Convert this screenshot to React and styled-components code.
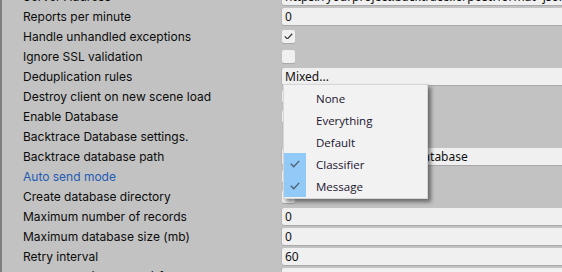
import React from 'react'
import styled, { createGlobalStyle } from 'styled-components'

const GlobalStyle = createGlobalStyle`
  html, body {
    margin: 0;
    padding: 0;
    background: #c2c2c2;
    overflow: hidden;
  }
`

const Inspector = styled.div`
  position: relative;
  width: 562px;
  height: 272px;
  overflow: hidden;
  border-left: 2px solid #7f7f7f;
  box-sizing: border-box;
  font-family: Inter, 'Noto Sans', sans-serif;
  font-size: 12px;
  color: #0b0b0b;
`

const List = styled.div`
  display: flex;
  flex-direction: column;
  margin-top: -14px;
`

const Row = styled.div`
  display: grid;
  grid-template-columns: 280px 1fr;
  align-items: center;
  height: 20px;
`

const Label = styled.div`
  padding-left: 21px;
  white-space: nowrap;
  color: ${(p) => (p.$link ? '#1f5bb4' : '#0b0b0b')};
`

const Field = styled.div`
  height: 17px;
  line-height: 17px;
  background: #f0f0f0;
  border-radius: 2px 0 0 2px;
  box-shadow: 0 1px 0 #a9a9a9, -1px 0 0 #b6b6b6;
  padding-left: 3px;
  white-space: nowrap;
  overflow: hidden;
  font-family: 'Noto Sans', sans-serif;
  font-size: 12px;
  color: #101010;
`

const Box = styled.div`
  width: 13px;
  height: 13px;
  border-radius: 2px;
  background: #f0f0f0;
  box-shadow: 0 1px 0 #a9a9a9;
  display: flex;
  align-items: center;
  justify-content: center;
`

const Menu = styled.div`
  position: absolute;
  left: 281px;
  top: 84px;
  width: 143px;
  padding: 2px 0 1px;
  background: #f2f2f2;
  border: 1px solid #d6d6d6;
  box-shadow: 3px 3px 4px rgba(0, 0, 0, 0.45);
  font-family: 'Open Sans', 'Noto Sans', sans-serif;
  font-size: 11.5px;
  color: #1b1530;
`

const Item = styled.div`
  display: flex;
  align-items: center;
  height: 22px;
`

const Check = styled.div`
  width: 22px;
  height: 22px;
  display: flex;
  align-items: center;
  justify-content: center;
  background: ${(p) => (p.$on ? '#91c9f7' : 'transparent')};
  margin-right: 10px;
`

const Tick = ({ color = '#333', size = 9 }) => (
  <svg width={size} height={size * 0.75} viewBox="0 0 12 9">
    <path d="M1 4.5 L4.5 8 L11 1" fill="none" stroke={color} strokeWidth="1.6" />
  </svg>
)

const rows = [
  { label: 'Server Address', kind: 'text', value: 'https://yourproject.backtrace.io/post?format=json&token=' },
  { label: 'Reports per minute', kind: 'text', value: '0' },
  { label: 'Handle unhandled exceptions', kind: 'check', value: true },
  { label: 'Ignore SSL validation', kind: 'check', value: false },
  { label: 'Deduplication rules', kind: 'text', value: 'Mixed...' },
  { label: 'Destroy client on new scene load', kind: 'check', value: false },
  { label: 'Enable Database', kind: 'check', value: true },
  { label: 'Backtrace Database settings.' },
  { label: 'Backtrace database path', kind: 'text', value: '{Application.dataPath}/database' },
  { label: 'Auto send mode', kind: 'check', value: true, link: true },
  { label: 'Create database directory', kind: 'check', value: true },
  { label: 'Maximum number of records', kind: 'text', value: '0' },
  { label: 'Maximum database size (mb)', kind: 'text', value: '0' },
  { label: 'Retry interval', kind: 'text', value: '60' },
  { label: 'Retry order (FIFO/LIFO) for database records', kind: 'text', value: 'Queue' },
]

const options = [
  { name: 'None', on: false },
  { name: 'Everything', on: false },
  { name: 'Default', on: false },
  { name: 'Classifier', on: true },
  { name: 'Message', on: true },
]

const App = () => {
  return (
    <>
      <GlobalStyle />
      <Inspector>
        <List>
          {rows.map((r, i) => (
            <Row key={i}>
              <Label $link={r.link}>{r.label}</Label>
              {r.kind === 'text' && <Field>{r.value}</Field>}
              {r.kind === 'check' && <Box>{r.value && <Tick color="#3a3a3a" />}</Box>}
            </Row>
          ))}
        </List>
        <Menu>
          {options.map((o) => (
            <Item key={o.name}>
              <Check $on={o.on}>{o.on && <Tick color="#4f5d70" size={10} />}</Check>
              {o.name}
            </Item>
          ))}
        </Menu>
      </Inspector>
    </>
  )
}

export default App
